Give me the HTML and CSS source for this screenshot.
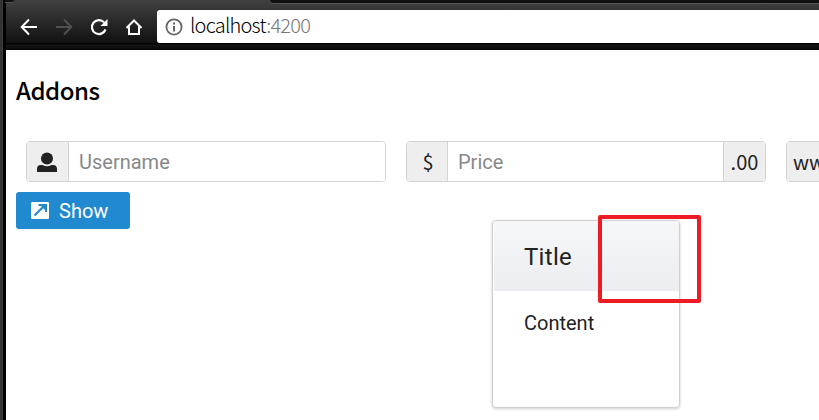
FILE: index.html
```html
<!DOCTYPE html>
<html lang="en">
<head>
<meta charset="utf-8">
<title>Addons</title>
<link rel="stylesheet" href="styles.css">
</head>
<body>
<header class="toolbar">
  <div class="tab-edge"></div>
  <div class="tab-strip"></div>
  <nav class="nav">
    <svg width="18" height="18" viewBox="0 0 18 18"><path d="M17 9H2M9 1.500L1.700 9L9 16.500" fill="none" stroke="#fff" stroke-width="2"/></svg>
    <svg width="18" height="18" viewBox="0 0 18 18"><path d="M1 9h15M9 1.500L16.300 9L9 16.500" fill="none" stroke="#505050" stroke-width="2"/></svg>
    <svg width="18" height="18" viewBox="0 0 18 18"><path d="M14 4.200A7 7 0 1 0 15.500 11.500" fill="none" stroke="#fff" stroke-width="2.200"/><path d="M17.500 1v7h-7z" fill="#fff"/></svg>
    <svg width="18" height="18" viewBox="0 0 18 18"><path d="M1.500 10L9 2.500l7.500 7.500M4 8.500V16h10V8.500" fill="none" stroke="#fff" stroke-width="2"/></svg>
  </nav>
  <div class="address">
    <svg width="18" height="18" viewBox="0 0 18 18"><circle cx="9" cy="9" r="7.600" fill="none" stroke="#666" stroke-width="1.800"/><path d="M8 4.500h2v2H8zM8 8h2v5.500H8z" fill="#666"/></svg>
    <span class="url">localhost<span class="port">:4200</span></span>
  </div>
</header>
<main class="page">
  <h1 class="heading">Addons</h1>
  <div class="fields">
    <div class="group">
      <span class="addon addon-user"><svg width="20" height="20" viewBox="0 0 20 20"><circle cx="10" cy="6.500" r="6" fill="#222"/><path d="M0 20v-3.200Q0 13.200 4 13h1.500Q10 15.500 14.500 13H16Q20 13.200 20 16.800V20z" fill="#222"/></svg></span>
      <input class="input username" placeholder="Username">
    </div>
    <div class="group">
      <span class="addon addon-dollar">$</span>
      <input class="input" placeholder="Price">
      <span class="addon addon-cents">.00</span>
    </div>
    <div class="group">
      <span class="addon addon-www">www</span>
      <input class="input">
    </div>
  </div>
  <button class="button"><svg width="18" height="17" viewBox="0 0 18 17"><rect width="18" height="17" rx="1" fill="#fff"/><path d="M3.500 13.500L12.500 4.500M7.500 3H15V10" fill="none" stroke="#2089cf" stroke-width="2"/><path d="M9 3h6v6z" fill="#2089cf"/></svg><span class="label">Show</span></button>
</main>
<section class="dialog">
  <div class="dialog-header"><span class="title">Title</span></div>
  <div class="dialog-content"><span class="content">Content</span></div>
</section>
<div class="highlight"></div>
</body>
</html>
```
FILE: styles.css
```css
* { box-sizing: border-box; }
body {
  margin: 0;
  height: 420px;
  overflow: hidden;
  position: relative;
  background: linear-gradient(90deg, #333 2px, #444 3px, #000 3px, #000 6px, #fff 6px);
  color: #222;
  font-family: Roboto, sans-serif;
}
svg { display: block; flex: none; }
.toolbar {
  position: relative;
  height: 50px;
  margin-left: 3px;
  padding: 10px 0 7px 17px;
  display: flex;
  background:
    linear-gradient(#000, #000) 0 0 / 3px 50px no-repeat,
    linear-gradient(#414141, #111 43px, #000 43px, #000 44px, #161616 45px, #050505 50px);
}
.tab-edge, .tab-strip {
  position: absolute;
  top: 0;
  height: 3px;
  background: #101010;
  border-bottom: 1px solid #555;
}
.tab-edge { left: 2px; width: 9px; border-radius: 0 0 5px 0; }
.tab-strip { left: 267px; right: 0; height: 4px; border-radius: 0 0 0 5px; }
.nav { display: flex; gap: 17px; align-items: center; width: 137px; }
.address {
  flex: 1;
  display: flex;
  align-items: center;
  padding-left: 8px;
  background: #fff;
  border-radius: 3px 0 0 3px;
}
.url {
  margin: -3px 0 0 7px;
  font: 300 20px/30px "Noto Sans CJK JP", sans-serif;
  letter-spacing: -0.750px;
  color: #000;
}
.port { color: #777; }
.page {
  height: 370px;
  margin-left: 6px;
  padding: 22px 0 0 10px;
}
.heading {
  margin: 0 0 33px;
  font: 500 24px/36px "Noto Sans CJK JP", sans-serif;
  letter-spacing: -0.500px;
  color: #000;
}
.fields {
  display: flex;
  gap: 20px;
  padding-left: 10px;
  overflow: hidden;
}
.group {
  display: flex;
  width: 360px;
  height: 41px;
  flex: none;
  border: 1px solid #d3d3d3;
  border-radius: 4px;
  overflow: hidden;
}
.addon {
  display: flex;
  align-items: center;
  justify-content: center;
  flex: none;
  background: #eee;
  font: 400 20px/38px "Noto Sans CJK JP", sans-serif;
}
.addon-user { width: 42px; padding-right: 1px; border-right: 1px solid #d3d3d3; }
.addon-dollar { width: 41px; padding-left: 2px; border-right: 1px solid #d3d3d3; }
.addon-cents { width: 42px; border-left: 1px solid #d3d3d3; }
.addon-www { padding-left: 6px; }
.input {
  flex: 1;
  min-width: 0;
  border: 0;
  padding: 0 10px;
  background: #fff;
  font: 400 20px Roboto, sans-serif;
}
.input::placeholder { color: #888; opacity: 1; }
.button {
  display: flex;
  align-items: center;
  width: 114px;
  height: 37px;
  margin-top: 10px;
  padding: 0 0 0 15px;
  border: 0;
  border-radius: 3px;
  background: #2089cf;
  color: #fff;
  font: 400 20px Roboto, sans-serif;
}
.label { margin: 0 0 0 10px; }
.dialog {
  position: absolute;
  left: 492px;
  top: 220px;
  width: 188px;
  height: 188px;
  border: 1px solid #d0d0d0;
  border-radius: 4px;
  background: #fff;
  box-shadow: 0 1px 3px rgba(0, 0, 0, .2);
  overflow: hidden;
}
.dialog-header {
  height: 70px;
  margin-left: 1px;
  padding: 0 30px;
  background: linear-gradient(#f6f7f9, #ebedf0);
  font-size: 24px;
  line-height: 72px;
  letter-spacing: 0.300px;
}
.dialog-content { padding: 20px 31px; font-size: 20px; line-height: 24px; }
.highlight {
  position: absolute;
  left: 598px;
  top: 215px;
  width: 103px;
  height: 88px;
  border: 4px solid #ed1c24;
  border-radius: 2px;
}
```
